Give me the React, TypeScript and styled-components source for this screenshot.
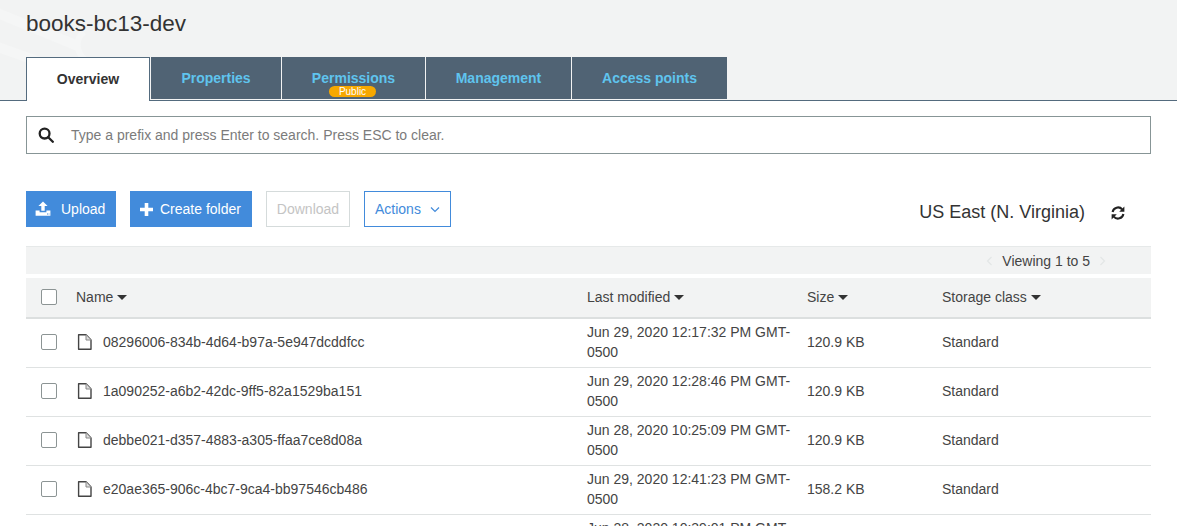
import React from "react";
import styled, { createGlobalStyle } from "styled-components";

const Global = createGlobalStyle`
  html, body { margin: 0; padding: 0; height: 526px; overflow: hidden; background: #fff; }
  * { box-sizing: border-box; }
  body { font-family: "Liberation Sans", Arial, sans-serif; font-size: 14px; color: #444; }
`;

const Header = styled.header`
  position: relative;
  height: 101px;
  background: #f2f3f3;
  border-bottom: 1px solid #546b7e;
  padding: 0 26px;
`;
const Watermark = styled.svg`
  position: absolute;
  left: 0;
  top: 0;
`;
const Title = styled.h1`
  position: relative;
  margin: 0;
  height: 57px;
  padding-top: 9px;
  font-size: 22.5px;
  line-height: 30px;
  font-weight: 400;
  color: #333;
`;
const Tabs = styled.nav`
  position: relative;
  display: flex;
  gap: 1px;
`;
const Tab = styled.div<{ $w: number; $active?: boolean }>`
  position: relative;
  width: ${(p) => p.$w}px;
  height: ${(p) => (p.$active ? 44 : 42)}px;
  display: flex;
  align-items: center;
  justify-content: center;
  padding-bottom: ${(p) => (p.$active ? 2 : 1)}px;
  font-size: 14px;
  font-weight: 700;
  background: ${(p) => (p.$active ? "#fff" : "#506374")};
  color: ${(p) => (p.$active ? "#333" : "#5fc4ee")};
  border: ${(p) => (p.$active ? "1px solid #546b7e" : "none")};
  border-bottom: none;
`;
const Badge = styled.span`
  position: absolute;
  left: 47px;
  top: 29px;
  width: 47px;
  height: 11px;
  border-radius: 6px;
  background: #f7a800;
  color: #fff;
  font-size: 10px;
  line-height: 11px;
  font-weight: 400;
  text-align: center;
`;

const Main = styled.main`
  padding: 15px 26px 0;
`;
const SearchBar = styled.div`
  height: 38px;
  border: 1px solid #879596;
  display: flex;
  align-items: center;
  padding-left: 11px;
  gap: 17px;
  background: #fff;
`;
const Placeholder = styled.span`
  font-size: 14px;
  color: #7b7b7b;
`;
const Toolbar = styled.div`
  display: flex;
  align-items: center;
  margin-top: 37px;
  height: 36px;
`;
const PrimaryButton = styled.div<{ $w: number; $pad: number; $gap: number }>`
  width: ${(p) => p.$w}px;
  height: 36px;
  margin-right: 14px;
  background: #428bdb;
  color: #fff;
  display: flex;
  align-items: center;
  padding-left: ${(p) => p.$pad}px;
  gap: ${(p) => p.$gap}px;
  font-size: 14px;
`;
const OutlineButton = styled.div<{ $w: number; $disabled?: boolean }>`
  width: ${(p) => p.$w}px;
  height: 36px;
  margin-right: 14px;
  border: 1px solid ${(p) => (p.$disabled ? "#d5dbdb" : "#428bdb")};
  color: ${(p) => (p.$disabled ? "#c4c4c4" : "#428bdb")};
  display: flex;
  align-items: center;
  justify-content: ${(p) => (p.$disabled ? "center" : "flex-start")};
  padding-left: ${(p) => (p.$disabled ? 0 : 10)}px;
  gap: 8px;
  font-size: 14px;
`;
const Region = styled.div`
  margin-left: auto;
  display: flex;
  align-items: center;
  padding-top: 6px;
  padding-right: 26px;
  gap: 26px;
  font-size: 18px;
  color: #333;
`;
const Pager = styled.div`
  margin-top: 19px;
  height: 28px;
  background: #f2f3f3;
  border-top: 1px solid #e6e9e9;
  display: flex;
  align-items: center;
  justify-content: flex-end;
  padding-right: 43px;
  gap: 6px;
  color: #444;
  font-size: 14px;
`;
const Row = styled.div<{ $head?: boolean }>`
  display: grid;
  grid-template-columns: 50px 511px 220px 135px 1fr;
  align-items: center;
  height: ${(p) => (p.$head ? 41 : 49)}px;
  background: ${(p) => (p.$head ? "#f2f3f3" : "#fff")};
  border-bottom: ${(p) => (p.$head ? "2px solid #dcdfdf" : "1px solid #dfe2e2")};
  padding-bottom: ${(p) => (p.$head ? 1 : 2)}px;
  margin-top: ${(p) => (p.$head ? 4 : 0)}px;
  color: #444;
  font-size: 14px;
  line-height: 20px;
`;
const CheckCell = styled.div`
  padding-left: 15px;
  display: flex;
`;
const Checkbox = styled.span`
  width: 16px;
  height: 16px;
  border: 1px solid #8c9494;
  border-radius: 2px;
  background: #fff;
`;
const HeadCell = styled.div`
  display: flex;
  align-items: center;
  gap: 4px;
  color: #444;
`;
const Caret = styled.span`
  width: 0;
  height: 0;
  border-left: 5px solid transparent;
  border-right: 5px solid transparent;
  border-top: 5px solid #333;
  margin-top: 1px;
`;
const NameCell = styled.div`
  display: flex;
  align-items: center;
  gap: 11px;
`;
const DateCell = styled.div`
  padding-right: 10px;
`;
const RefreshSvg = styled.svg`
  margin-top: 2px;
`;

const FileIcon = () => (
  <svg width="16" height="16" viewBox="0 0 16 16" fill="none" stroke="#444" strokeWidth="1.4" strokeLinejoin="round">
    <path d="M2.6.8v14.4h12.4V6L10 .8z" />
    <path d="M10 .8V6h5" fill="#ddd" stroke="#888" strokeWidth="1" />
  </svg>
);
const SearchIcon = () => (
  <svg width="16" height="16" viewBox="0 0 16 16" fill="none" stroke="#222" strokeWidth="2.3">
    <circle cx="6.6" cy="6.6" r="4.9" />
    <path d="M10.2 10.2l4.6 4.6" strokeLinecap="round" />
  </svg>
);
const UploadIcon = () => (
  <svg width="16" height="16" viewBox="0 0 16 16" fill="#fff">
    <path d="M8 .5l4.6 4.6H9.7v4.7H6.3V5.1H3.4z" />
    <path fillRule="evenodd" d="M.6 9.4h4v1.9h6.8V9.4h4v5.3H.6zM12 12.6v1h1v-1zM13.6 12.6v1h.8v-1z" />
  </svg>
);
const PlusIcon = () => (
  <svg width="13" height="13" viewBox="0 0 13 13" fill="#fff">
    <path d="M4.7 0h3.6v4.7H13v3.6H8.3V13H4.7V8.3H0V4.7h4.7z" />
  </svg>
);
const Chevron = ({ dir, color, size }: { dir: "down" | "left" | "right"; color: string; size: number }) => {
  const d = dir === "down" ? "M2 4.5l4 4 4-4" : dir === "left" ? "M7.5 2l-4 4 4 4" : "M4.5 2l4 4-4 4";
  return (
    <svg width={size} height={size} viewBox="0 0 12 12" fill="none" stroke={color} strokeWidth="1.2">
      <path d={d} />
    </svg>
  );
};
const RefreshIcon = () => (
  <RefreshSvg width="14" height="14" viewBox="0 0 14 14" fill="none" stroke="#222" strokeWidth="2.1">
    <path d="M1.6 6a5.5 5.5 0 0 1 9.6-2.6" />
    <path d="M13.4.6v5.2H8.2z" fill="#222" stroke="none" />
    <path d="M12.4 8a5.5 5.5 0 0 1-9.6 2.6" />
    <path d="M.6 13.4V8.2h5.2z" fill="#222" stroke="none" />
  </RefreshSvg>
);

const files = [
  { name: "08296006-834b-4d64-b97a-5e947dcddfcc", date: "Jun 29, 2020 12:17:32 PM GMT-0500", size: "120.9 KB", cls: "Standard" },
  { name: "1a090252-a6b2-42dc-9ff5-82a1529ba151", date: "Jun 29, 2020 12:28:46 PM GMT-0500", size: "120.9 KB", cls: "Standard" },
  { name: "debbe021-d357-4883-a305-ffaa7ce8d08a", date: "Jun 28, 2020 10:25:09 PM GMT-0500", size: "120.9 KB", cls: "Standard" },
  { name: "e20ae365-906c-4bc7-9ca4-bb97546cb486", date: "Jun 29, 2020 12:41:23 PM GMT-0500", size: "158.2 KB", cls: "Standard" },
  { name: "", date: "Jun 28, 2020 10:39:01 PM GMT-0500", size: "", cls: "" },
];

export default function App() {
  return (
    <>
      <Global />
      <Header>
        <Watermark width="130" height="100" viewBox="0 0 130 100" fill="none" stroke="#f5f6f6" strokeWidth="10">
          <path d="M-5 12L78 46" />
          <path d="M-5 46L90 80" />
          <path d="M84 32c-10 8-8 22 4 30" strokeWidth="6" />
        </Watermark>
        <Title>books-bc13-dev</Title>
        <Tabs>
          <Tab $w={124} $active>Overview</Tab>
          <Tab $w={130}>Properties</Tab>
          <Tab $w={143}>
            Permissions
            <Badge>Public</Badge>
          </Tab>
          <Tab $w={145}>Management</Tab>
          <Tab $w={155}>Access points</Tab>
        </Tabs>
      </Header>
      <Main>
        <SearchBar>
          <SearchIcon />
          <Placeholder>Type a prefix and press Enter to search. Press ESC to clear.</Placeholder>
        </SearchBar>
        <Toolbar>
          <PrimaryButton $w={90} $pad={9} $gap={10}>
            <UploadIcon />
            Upload
          </PrimaryButton>
          <PrimaryButton $w={122} $pad={10} $gap={7}>
            <PlusIcon />
            Create folder
          </PrimaryButton>
          <OutlineButton $w={84} $disabled>Download</OutlineButton>
          <OutlineButton $w={87}>
            Actions
            <Chevron dir="down" color="#428bdb" size={12} />
          </OutlineButton>
          <Region>
            US East (N. Virginia)
            <RefreshIcon />
          </Region>
        </Toolbar>
        <Pager>
          <Chevron dir="left" color="#e3e6e6" size={12} />
          Viewing 1 to 5
          <Chevron dir="right" color="#e3e6e6" size={12} />
        </Pager>
        <Row $head>
          <CheckCell><Checkbox /></CheckCell>
          <HeadCell>Name <Caret /></HeadCell>
          <HeadCell>Last modified <Caret /></HeadCell>
          <HeadCell>Size <Caret /></HeadCell>
          <HeadCell>Storage class <Caret /></HeadCell>
        </Row>
        {files.map((f) => (
          <Row key={f.date}>
            <CheckCell><Checkbox /></CheckCell>
            <NameCell><FileIcon />{f.name}</NameCell>
            <DateCell>{f.date}</DateCell>
            <div>{f.size}</div>
            <div>{f.cls}</div>
          </Row>
        ))}
      </Main>
    </>
  );
}
